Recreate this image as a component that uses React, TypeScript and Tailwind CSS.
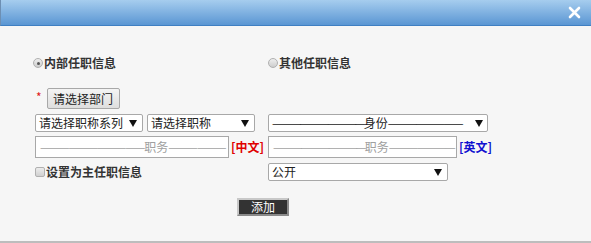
import React from "react";

const font = { fontFamily: '"Microsoft YaHei","Noto Sans CJK SC",sans-serif' };

function Arrow() {
  return (
    <svg width="8" height="7" viewBox="0 0 8 7" className="shrink-0">
      <path d="M0 0 H8 L4 7 Z" fill="#111" />
    </svg>
  );
}

function Radio({ checked }: { checked?: boolean }) {
  return (
    <span className="relative inline-block shrink-0 w-[10px] h-[10px] rounded-full border border-[#b0b0b0] bg-gradient-to-b from-[#eeeeee] to-[#cdcdcd]">
      {checked && (
        <span className="absolute left-[2.5px] top-[2.5px] w-[3px] h-[3px] rounded-full bg-[#555]" />
      )}
    </span>
  );
}

export default function App() {
  return (
    <div className="w-[591px] h-[243px] bg-[#f6f6f6] text-[12px] text-[#222] flex flex-col border-b-2 border-[#bdbdbd]" style={font}>
      <div className="h-[26px] shrink-0 bg-gradient-to-b from-[#a6cdee] to-[#5a96d3] border-b border-[#3f7fc2] border-l border-l-[#6d8fb3] flex items-center justify-end pr-[10px]">
        <svg width="13" height="13" viewBox="0 0 13 13">
          <path d="M2 2 L11 11 M11 2 L2 11" stroke="#fff" strokeWidth="2.6" strokeLinecap="round" />
        </svg>
      </div>
      <div className="flex flex-col pl-[35px]">
        <div className="flex mt-[30px] h-[14px] items-center font-bold text-[#333]">
          <div className="w-[235px] flex items-center -ml-[2px]">
            <Radio checked />
            <span className="ml-[1px] leading-none">内部任职信息</span>
          </div>
          <div className="flex items-center">
            <Radio />
            <span className="ml-[1px] leading-none">其他任职信息</span>
          </div>
        </div>
        <div className="flex items-center mt-[18px] h-[21px]">
          <span className="text-[#e02020] text-[12px] mr-[5px] ml-[1px] mt-[-4px]">*</span>
          <div className="h-[21px] w-[73px] flex items-center justify-center border border-[#a8a8a8] rounded-[2px] bg-gradient-to-b from-[#f4f4f4] to-[#dedede] text-[#222]">
            请选择部门
          </div>
        </div>
        <div className="flex mt-[5px] h-[18px]">
          <div className="w-[108px] h-[18px] border border-[#a8a8a8] rounded-[2px] bg-white flex items-center justify-between pl-[3px] pr-[5px]">
            <span>请选择职称系列</span>
            <Arrow />
          </div>
          <div className="ml-[4px] w-[108px] h-[18px] border border-[#a8a8a8] rounded-[2px] bg-white flex items-center justify-between pl-[3px] pr-[5px]">
            <span>请选择职称</span>
            <Arrow />
          </div>
          <div className="ml-[13px] w-[220px] h-[18px] border border-[#a8a8a8] rounded-[2px] bg-white flex items-center justify-between pl-[3px] pr-[4px]">
            <span className="whitespace-nowrap">
              <span className="tracking-[-1.9px]">——————————</span>身份<span className="tracking-[-1.6px]">————————</span>
            </span>
            <Arrow />
          </div>
        </div>
        <div className="flex mt-[4px] h-[22px] items-center">
          <div className="w-[233px] flex items-center">
            <div className="w-[194px] h-[22px] border border-[#a8a8a8] bg-white flex items-center pl-[4px] text-[#a0a0a0] whitespace-nowrap">
              <span className="tracking-[-1.1px]">———————————</span>职务<span className="tracking-[-0.8px]">——————</span>
            </div>
            <span className="ml-[2px] font-bold text-[#e00000]">[中文]</span>
          </div>
          <div className="w-[189px] h-[22px] border border-[#a8a8a8] bg-white flex items-center pl-[4px] text-[#a0a0a0] whitespace-nowrap">
            <span className="tracking-[-1.9px]">——————————</span>职务<span className="tracking-[-1.3px]">———————</span>
          </div>
          <span className="ml-[2px] font-bold text-[#1010d0]">[英文]</span>
        </div>
        <div className="flex mt-[5px] h-[18px] items-center">
          <div className="w-[233px] flex items-center font-bold text-[#333]">
            <span className="w-[10px] h-[10px] rounded-[2px] border border-[#b0b0b0] bg-gradient-to-b from-[#ececec] to-[#d0d0d0]" />
            <span className="ml-[1px] leading-none">设置为主任职信息</span>
          </div>
          <div className="w-[180px] h-[18px] border border-[#a8a8a8] rounded-[2px] bg-white flex items-center justify-between pl-[3px] pr-[5px]">
            <span>公开</span>
            <Arrow />
          </div>
        </div>
        <div className="flex mt-[17px] pl-[202px]">
          <div className="w-[52px] h-[18px] bg-[#333] border-2 border-t-[#c8c8c8] border-l-[#c8c8c8] border-r-[#8a8a8a] border-b-[#8a8a8a] text-white flex items-center justify-center leading-none">
            添加
          </div>
        </div>
      </div>
    </div>
  );
}
